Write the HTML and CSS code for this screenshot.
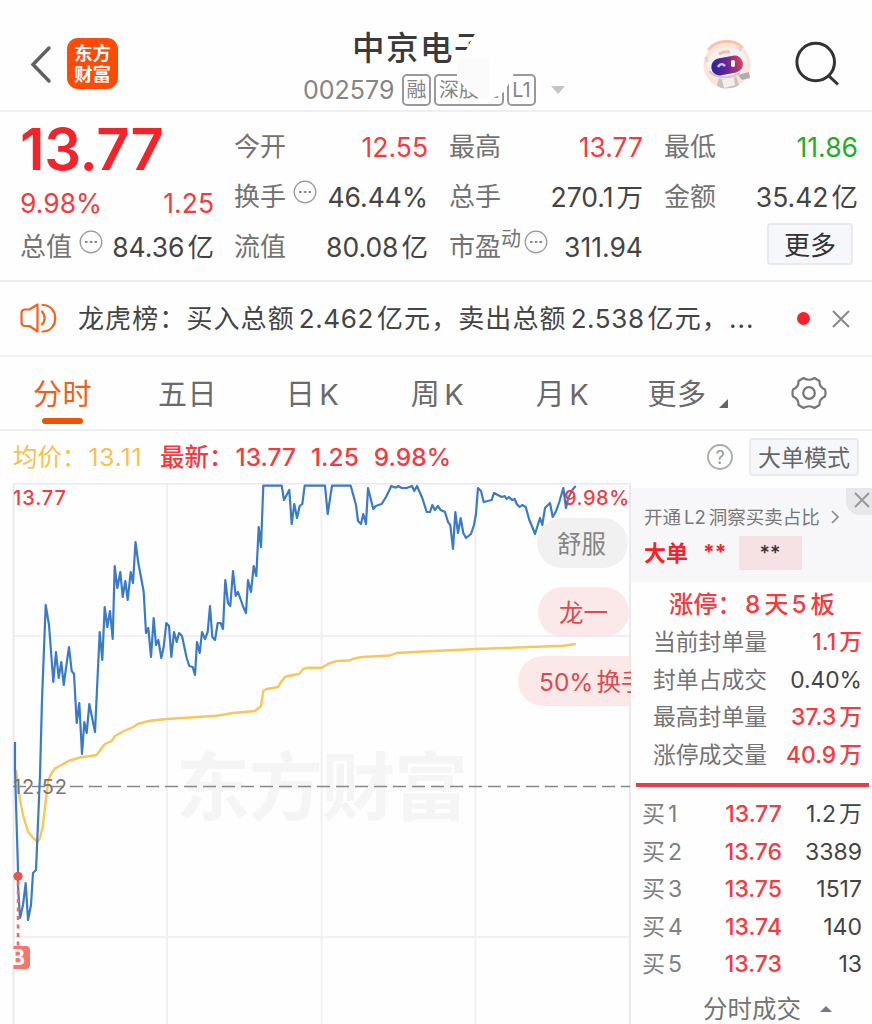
FILE: index.html
```
<!DOCTYPE html>
<html lang="zh-CN">
    <head>
        <meta charset="utf-8">
        <title>中京电子 002579</title>
        <meta name="viewport" content="width=device-width, initial-scale=1.0">
        <link rel="stylesheet" href="styles.css">
    </head>
    <body>

        <header class="header">
            <svg class="back" width="24" height="40" viewBox="0 0 24 40"><path d="M21 4 5 20.500 21 37"/></svg>
            <div class="logo"><span>东方</span><span>财富</span></div>
            <div class="title">
                <h1>中京电子</h1>
                <div class="code">
                    <span class="num">002579</span>
                    <span class="tag">融</span>
                    <span class="tag tag-wide">深股通</span>
                    <span class="tag">L1</span>
                    <i class="arrow-down"></i>
                </div>
                <svg class="smudge" width="66" height="74" viewBox="452 28 66 74">
                    <path class="smudge-light" d="M477 30 466 50 457 58 457 77 467 90 478 97 490 100 504 92 513 77 516 30Z"/>
                    <path class="smudge-dark" d="M457 59h32v40h-9l-13-9-10-13Z"/>
                </svg>
            </div>
            <svg class="robot" width="54" height="54" viewBox="700 38 54 54">
                <defs>
                    <linearGradient id="visor">
                        <stop offset="0" stop-color="#2a249c"/>
                        <stop offset=".5" stop-color="#6a2599"/>
                        <stop offset="1" stop-color="#e0434f"/>
                    </linearGradient>
                </defs>
                <circle cx="727" cy="65" r="23.500" fill="#fde4d6"/>
                <path d="M708 50A24 24 0 0 1 743 48" fill="none" stroke="#fbc4a8" stroke-width="3"/>
                <path d="M719 78q8 5 17-2l3 9q-5 4-11 3-7 2-11-3z" fill="#c9c3c6"/>
                <path d="M722 80l12-2 1 7-11 3z" fill="#f3eff0"/>
                <path d="M738 75l11-3 1 6-8 2z" fill="#b3acb3"/>
                <ellipse cx="727" cy="63" rx="20" ry="15.500" fill="#f4f1f2" transform="rotate(-12 727 63)"/>
                <path d="M709 71q9 9 24 5l7-3" fill="none" stroke="#cfc8cb" stroke-width="2"/>
                <path d="M706 57l1 5M739 47l2 4" stroke="#ddd5da" stroke-width="3"/>
                <path d="M719 54q5-3 11-2" fill="none" stroke="#e6c3ae" stroke-width="3"/>
                <rect x="711" y="57" width="32" height="17" rx="8.500" fill="url(#visor)" transform="rotate(-11 727 65)"/>
                <path d="M718 67q3-5 7-1" fill="none" stroke="#c5c9fa" stroke-width="2.500"/>
                <rect x="731" y="60" width="4" height="7" rx="2" fill="#fff"/>
            </svg>
            <svg class="search" width="48" height="48" viewBox="793 39 48 48"><circle cx="815.700" cy="62" r="18.800"/><path d="M829 76l9 8.500"/></svg>
        </header>

        <section class="quote">
            <div class="quote-main">
                <div class="price">13.77</div>
                <div class="change"><span>9.98%</span><span>1.25</span></div>
                <div class="cell"><span class="label">总值</span><svg class="dots" width="24" height="24"><use href="#dots"/></svg><span class="val">84.36<b>亿</b></span></div>
            </div>
            <div class="quote-grid">
                <div class="cell"><span class="label">今开</span><span class="val red">12.55</span></div>
                <div class="cell"><span class="label">最高</span><span class="val red">13.77</span></div>
                <div class="cell"><span class="label">最低</span><span class="val green">11.86</span></div>
                <div class="cell"><span class="label">换手</span><svg class="dots" width="24" height="24"><use href="#dots"/></svg><span class="val">46.44%</span></div>
                <div class="cell"><span class="label">总手</span><span class="val">270.1<b>万</b></span></div>
                <div class="cell"><span class="label">金额</span><span class="val">35.42<b>亿</b></span></div>
                <div class="cell"><span class="label">流值</span><span class="val">80.08<b>亿</b></span></div>
                <div class="cell"><span class="label">市盈</span><span class="sup">动</span><svg class="dots dots-tight" width="24" height="24"><use href="#dots"/></svg><span class="val">311.94</span></div>
                <div class="cell"><button class="more">更多</button></div>
            </div>
        </section>

        <section class="news">
            <svg class="speaker" width="38" height="34" viewBox="20 302 38 34">
                <path d="M37.500 304.500v27l-8-5.500h-5q-3-.5-3-3.500v-9.500q0-3 3-3.500h5z"/>
                <path d="M42 311.500q5.500 6.500 0 13M42.500 305c17 0 17 26.500 0 26.500"/>
            </svg>
            <p>龙虎榜：买入总额<em>2.462</em>亿元，卖出总额<em>2.538</em>亿元，<span class="ellipsis">...</span></p>
            <i class="dot"></i>
            <svg class="close" width="18" height="18"><path d="M1 1l16 16M17 1 1 17"/></svg>
        </section>

        <nav class="tabs">
            <a class="active">分时</a>
            <a>五日</a>
            <a>日<em>K</em></a>
            <a>周<em>K</em></a>
            <a>月<em>K</em></a>
            <a>更多<i class="corner"></i></a>
            <svg class="gear" width="36" height="36" viewBox="-18 -18 36 36">
                <path d="M-5.500-15Q0-11.500 5.500-15L10.500-12Q10-6 16-3.500 17 0 16 3.500 10 6 10.500 12L5.500 15Q0 11.500-5.500 15L-10.500 12Q-10 6-16 3.500-17 0-16-3.500-10-6-10.500-12Z"/>
                <circle r="5.800"/>
            </svg>
        </nav>

        <section class="legend">
            <span class="avg">均价：<em>13.11</em></span>
            <span class="last">最新：<em>13.77</em><em>1.25</em><em>9.98%</em></span>
            <svg class="help" width="28" height="28"><circle cx="14" cy="14" r="12"/><text x="14" y="20.500" text-anchor="middle">?</text></svg>
            <button class="mode">大单模式</button>
        </section>

        <main class="main">
            <div class="chart">
                <svg width="632" height="541" viewBox="0 483 632 541">
                    <text class="watermark" x="176" y="814" textLength="292">东方财富</text>
                    <path class="grid" d="M167 484V1024M321.500 484V1024M475.500 484V1024M14 636H630M14 937H630"/>
                    <path class="frame" d="M13.500 1024V483.500H630V1024"/>
                    <path class="base" d="M13 786.500H630"/>
                    <polyline class="avg-line" points="16,770 18,786 20,800 23,815 26,825 28.300,832 33.300,838 37.700,842 40,838 42.700,827 45,807 48.300,780 51.700,773 55,768.500 63.300,764 68.300,761 80,757.500 96.700,755 101.700,748 105,744 111.700,741 115,736 123,731.500 133.300,727 137.700,724 150,720.700 166.700,719 216.700,715.700 233,713 255,711 261,706 263.300,691 266.700,689 278,687 281.700,681 285,677 290,675.500 299,674 303.300,669 308,667.700 321.700,667.700 328.300,663.700 336.700,661 349.300,660.500 353.300,658.700 361.700,657 390,655.500 396.700,653 423,651.500 476.700,649 523,647.300 563,645.700 575.700,644"/>
                    <polyline class="price-line" points="15,742 15,770 18,870 18,885 20,918 23,905 25.700,883 28,920 31,905 33,873 36,870 40,775 42,700 45.700,605 49,625 53.300,682 56,652 58.700,678 61.300,662 63.700,685 66.700,663 69,647 71.700,671 74,674 76.700,723 79.300,703 82,754 84.300,722 86.700,733 89.300,704 95,732 99.700,632 102.300,660 104.700,607 107.300,627 110,611 112.700,639 114.700,566 117.300,588 120.300,572 122.700,597 125.300,581 127.700,600 130.700,572 133,583 135.500,542 138.300,563 141,577 143.700,592 146,633 148.300,628 151,657 153.700,618 156,645 158.300,640 161.300,658 163.700,647 166.300,623 169,626 171.300,657 174,632 176.700,642 179,633 182,636 186.700,658 189.300,666 192.700,667 195,675 197,642 199.700,653 202,632 205,639 207.700,632 210,606 212.300,637 215,640 217.700,623 220.700,623 223,629 225.300,580 228,603 230.300,606 233,571 235.700,596 238,592 243.300,607 246,613 248,580 251,592 253.700,566 256.300,576 258.700,527 261,547 263.300,485.700 281.700,485.700 284,500 289.300,490 291.700,524 294.300,504 297,518 299.700,506 302.300,504 304.700,485.700 325,485.700 327.700,514 332,485.700 350.700,485.700 356,505 358,521 361,524 363.300,514 366,524 368,488 373.300,509 375.700,506 381.700,504 386,497 391.300,486 395.700,487.700 398.300,486 401.700,488 406.700,488 412,486 414.300,491 417,486 422.300,498 426.700,512 430,512 432.300,505 435,510 437.700,506 440.700,510 445,512 448,522 450.300,525 453,549 455.300,512 458,533 460.700,518 463.300,533 466,538 471,534 474,525 476,514 478,488 481,491 483.700,502 491.700,500 494,493 501.700,497 504.700,496 506.700,499 509,497 512,500 514.700,499 516.700,504 519.700,507 522.300,505 525.700,507 529.300,520 532.700,528 535,534 540,518 542.300,525 545,508 550,503 552.700,517 555.700,512 559.300,502 563.300,488 566,508 568.300,498 572.300,490 575.700,486"/>
                    <path class="buy-stem" d="M18 882V946"/>
                    <circle class="buy-point" cx="18" cy="876.300" r="4.600"/>
                    <path class="buy-flag" d="M13.500 946H26q4 0 4 4v15q0 4-4 4H13.500z"/>
                    <text class="buy-text" x="11" y="965">B</text>
                    <text class="axis red-text" x="13" y="504.500" textLength="53">13.77</text>
                    <text class="axis red-text" x="564" y="504.500" textLength="65">9.98%</text>
                    <text class="axis" x="13" y="793.500" textLength="54">12.52</text>
                </svg>
                <div class="pills">
                    <span class="pill pill-gray">舒服</span>
                    <span class="pill">龙一</span>
                    <span class="pill pill-cut"><em>50%</em>换手</span>
                </div>
            </div>

            <aside class="side">
                <div class="promo">
                    <div class="promo-line">开通<em>L2</em>洞察买卖占比<svg width="8" height="14"><path d="M1 1l6 6-6 6"/></svg></div>
                    <div class="promo-big"><strong>大单</strong><span class="stars">**</span><span class="stars-box">**</span></div>
                    <div class="promo-close"><svg width="16" height="16"><path d="M1 1l14 14M15 1 1 15"/></svg></div>
                </div>
                <div class="limit">
                    <h2>涨停：<em>8</em>天<em>5</em>板</h2>
                    <div class="row"><span>当前封单量</span><span class="red">1.1<b>万</b></span></div>
                    <div class="row"><span>封单占成交</span><span class="dark">0.40%</span></div>
                    <div class="row"><span>最高封单量</span><span class="red">37.3<b>万</b></span></div>
                    <div class="row"><span>涨停成交量</span><span class="red">40.9<b>万</b></span></div>
                </div>
                <div class="orders">
                    <div class="order"><span>买<em>1</em></span><span class="red">13.77</span><span class="dark">1.2<b>万</b></span></div>
                    <div class="order"><span>买<em>2</em></span><span class="red">13.76</span><span class="dark">3389</span></div>
                    <div class="order"><span>买<em>3</em></span><span class="red">13.75</span><span class="dark">1517</span></div>
                    <div class="order"><span>买<em>4</em></span><span class="red">13.74</span><span class="dark">140</span></div>
                    <div class="order"><span>买<em>5</em></span><span class="red">13.73</span><span class="dark">13</span></div>
                </div>
                <div class="deals">分时成交<i class="arrow-up"></i></div>
            </aside>
        </main>

        <svg class="symbols" width="0" height="0">
            <symbol id="dots" viewBox="0 0 24 24">
                <circle cx="12" cy="12" r="10.800" fill="none" stroke="#999" stroke-width="1.300"/>
                <path d="M6 12h2.500M10.800 12h2.500M15.500 12h2.500" stroke="#888" stroke-width="2"/>
            </symbol>
        </svg>
    </body>
</html>
```

FILE: styles.css
```
* {
    box-sizing: border-box;
    margin: 0;
}

body {
    width: 872px;
    height: 1024px;
    overflow: hidden;
    background: #fefefe;
    color: #444;
    font-family: Inter, "Noto Sans CJK SC", sans-serif;
}

em, i, b {
    font-style: normal;
    font-weight: inherit;
}

button {
    padding: 0;
    border: 2px solid #e9eaf0;
    border-radius: 4px;
    background: #f6f7fa;
    color: #333;
    font-family: inherit;
}

svg {
    flex: none;
}

.red {
    color: #f43b40;
}

.green {
    color: #1fae20;
}

.dark {
    color: #444;
}

/* header */

.header {
    position: relative;
    display: flex;
    height: 112px;
    padding: 38px 31px 0 28px;
    border-bottom: 2px solid #efeff1;
}

.back {
    margin-top: 6px;
    fill: none;
    stroke: #606060;
    stroke-width: 3.5;
    stroke-linecap: round;
}

.logo {
    display: flex;
    flex-direction: column;
    justify-content: center;
    width: 51px;
    height: 51px;
    margin-left: 15px;
    border-radius: 11px;
    background: #ff4a08;
    color: #fff;
    font-size: 18.500px;
    font-weight: 700;
    line-height: 21px;
    text-align: center;
}

.title {
    width: 270px;
    margin-left: 185px;
    margin-top: -10px;
}

.title h1 {
    padding-left: 49px;
    color: #3a3a3a;
    font-size: 32.500px;
    font-weight: 500;
    letter-spacing: 1.5px;
    line-height: 42px;
}

.code {
    display: flex;
    align-items: center;
    height: 32px;
    margin-top: 4px;
    color: #858585;
    font-size: 20px;
}

.num {
    width: 99px;
    font-size: 25px;
    letter-spacing: 0;
}

.tag {
    width: 29px;
    height: 32px;
    margin-right: 3px;
    border: 2px solid #999;
    border-radius: 5px;
    line-height: 29px;
    text-align: center;
}

.tag-wide {
    width: 70px;
}

.arrow-down {
    margin-left: 12px;
    border: 7px solid transparent;
    border-top: 8px solid #c4c4c4;
    border-bottom: 0;
}

.smudge {
    position: absolute;
    left: 452px;
    top: 28px;
}

.smudge-light {
    fill: #fefefe;
}

.smudge-dark {
    fill: #fbfbfb;
}

.robot {
    margin-left: 127px;
}

.search {
    margin-left: auto;
    margin-top: 1px;
    fill: none;
    stroke: #333;
    stroke-width: 3;
}

/* quote */

.quote {
    display: flex;
    gap: 20px;
    height: 170px;
    padding: 9px 14px 0 20px;
    border-bottom: 2px solid #ececee;
}

.quote-main {
    width: 194px;
}

.price {
    height: 57px;
    color: #f5222a;
    font-size: 58px;
    font-weight: 600;
    line-height: 57px;
    letter-spacing: -.4px;
}

.change {
    display: flex;
    justify-content: space-between;
    height: 34px;
    margin-bottom: 9px;
    margin-top: 8px;
    color: #f43b40;
    font-size: 26.500px;
    line-height: 34px;
}

.quote-grid {
    display: grid;
    grid-template-columns: repeat(3, 194px);
    grid-auto-rows: 50px;
    column-gap: 21px;
}

.cell {
    display: flex;
    align-items: center;
    height: 50px;
    font-size: 26px;
    line-height: 50px;
}

.quote-main .cell {
    height: 34px;
}

.label {
    padding-top: 2px;
    color: #737373;
}

.val {
    margin-left: auto;
    padding-top: 1px;
    font-size: 26.500px;
}

.val b {
    margin-left: 3px;
}

.dots {
    margin-left: 7px;
    margin-bottom: 9px;
}

.dots-tight {
    margin-left: 3px;
}

.sup {
    margin-bottom: 14px;
    color: #737373;
    font-size: 20px;
}

.more {
    width: 86px;
    height: 42px;
    margin-left: auto;
    margin-right: 5px;
    margin-bottom: 5px;
    padding-top: 3px;
    font-size: 26px;
    line-height: 36px;
}

/* news */

.news {
    display: flex;
    align-items: center;
    height: 75px;
    padding-left: 20px;
    border-bottom: 2px solid #f0f0f2;
}

.speaker {
    fill: none;
    stroke: #f0641e;
    stroke-width: 2.2;
    stroke-linecap: round;
    stroke-linejoin: round;
}

.news p {
    width: 678px;
    margin-left: 20px;
    font-size: 26px;
    letter-spacing: 1.1px;
    line-height: 73px;
    white-space: nowrap;
}

.news em {
    margin: 0 3px 0 4px;
    letter-spacing: .6px;
}

.dot {
    width: 13px;
    height: 13px;
    margin-left: 41px;
    border-radius: 50%;
    background: #f5222a;
}

.close {
    margin-left: 22px;
    stroke: #888;
    stroke-width: 2;
}

/* tabs */

.tabs {
    display: grid;
    grid-template-columns: repeat(6, 125px) 1fr;
    align-items: center;
    height: 74px;
    border-bottom: 2px solid #eeeef3;
    color: #6a6a6a;
    font-size: 29px;
    text-align: center;
}

.tabs a {
    position: relative;
    padding-top: 4px;
    letter-spacing: .5px;
    line-height: 42px;
}

.tabs em {
    margin-left: 4px;
}

.tabs .active {
    color: #f06016;
}

.active::after {
    content: "";
    position: absolute;
    left: 42px;
    bottom: -8px;
    width: 41px;
    height: 6px;
    border-radius: 3px;
    background: #ea5504;
}

.corner {
    display: inline-block;
    margin-left: 12px;
    margin-bottom: -3px;
    border-bottom: 9px solid #666;
    border-left: 9px solid transparent;
}

.gear {
    margin-left: 41px;
    fill: none;
    stroke: #777;
    stroke-width: 2.2;
    stroke-linejoin: round;
}

/* legend */

.legend {
    display: flex;
    align-items: center;
    height: 52px;
    padding: 0 13px;
    font-size: 24.500px;
    line-height: 52px;
}

.avg {
    width: 147px;
    color: #fbc04b;
}

.avg em {
    letter-spacing: .9px;
}

.last {
    color: #f43b40;
    font-weight: 500;
}

.legend em {
    margin-left: 2px;
}

.last em {
    margin-right: 13px;
}

.help {
    margin-left: auto;
    margin-right: 15px;
    fill: none;
    stroke: #aaa;
    stroke-width: 1.8;
}

.help text {
    fill: #999;
    stroke: none;
    font-size: 18px;
}

.mode {
    width: 110px;
    height: 38px;
    padding-top: 2px;
    color: #666;
    font-size: 23px;
    line-height: 32px;
}

/* chart */

.main {
    display: flex;
    height: 541px;
}

.chart {
    position: relative;
    width: 631px;
    overflow: hidden;
}

.chart > svg {
    display: block;
}

.chart path, .chart polyline {
    fill: none;
}

.watermark {
    fill: #f5f5f5;
    font-size: 74px;
    font-weight: 700;
}

.grid {
    stroke: #f0f0f6;
    stroke-width: 2;
}

.frame {
    stroke: #e9e9ee;
    stroke-width: 2;
}

.base {
    stroke: #888;
    stroke-width: 1.3;
    stroke-dasharray: 13 6;
}

.avg-line {
    stroke: #fac559;
    stroke-width: 2.4;
    stroke-linejoin: round;
}

.price-line {
    stroke: #3a7bc8;
    stroke-width: 2.2;
    stroke-linejoin: round;
}

.buy-stem {
    stroke: #f4695f;
    stroke-width: 2.5;
    stroke-dasharray: 4 4.5;
}

.buy-point {
    fill: #e85550;
}

.chart .buy-flag {
    fill: #fa7569;
}

.buy-text {
    fill: #fff;
    font-size: 21px;
    font-weight: 700;
}

.axis {
    fill: #777;
    font-size: 20px;
}

.chart .red-text {
    fill: #f43b40;
    font-weight: 500;
}

.pills {
    position: absolute;
    left: 518px;
    top: 35px;
    display: flex;
    flex-direction: column;
    align-items: flex-start;
    gap: 19px;
}

.pill {
    width: 91px;
    height: 50px;
    margin-left: 20px;
    border-radius: 25px;
    background: rgba(249, 226, 226, .75);
    color: #e0494c;
    font-size: 24.500px;
    line-height: 52px;
    text-align: center;
    white-space: nowrap;
}

.pill-gray {
    margin-left: 19px;
    padding-right: 2px;
    background: rgba(240, 240, 240, .9);
    color: #858585;
}

.pill-cut {
    width: 150px;
    margin-left: 0;
    padding-left: 21px;
    text-align: left;
}

.pill em {
    margin-right: 3px;
}

/* side panel */

.side {
    width: 241px;
    padding-top: 5px;
}

.promo {
    position: relative;
    height: 94px;
    padding: 16px 0 0 13px;
    background: #f7f7fa;
}

.promo-line {
    height: 26px;
    color: #777;
    font-size: 18.500px;
    line-height: 27px;
    white-space: nowrap;
}

.promo-line em {
    margin: 0 3px;
}

.promo-line svg {
    margin-left: 11px;
    fill: none;
    stroke: #888;
    stroke-width: 1.6;
}

.promo-big {
    display: flex;
    align-items: center;
    height: 34px;
    margin-top: 6px;
    color: #f5222a;
    font-size: 22px;
    line-height: 34px;
}

.stars {
    margin-left: 15px;
    font-size: 21px;
    font-weight: 700;
}

.stars-box {
    width: 63px;
    height: 34px;
    margin-left: 12px;
    background: #f6e1e4;
    color: #333;
    font-size: 20px;
    font-weight: 500;
    text-align: center;
}

.promo-close {
    position: absolute;
    right: 0;
    top: 0;
    width: 26px;
    height: 27px;
    padding: 4px 0 0 8px;
    border-bottom-left-radius: 14px;
    background: #e8e8ea;
    line-height: 0;
}

.promo-close path {
    stroke: #999;
    stroke-width: 2;
}

.limit {
    height: 205px;
    margin: 0 3px 0 5px;
    padding: 3px 7px 0 17px;
    border-bottom: 4px solid #e53e43;
}

.limit h2 {
    height: 37px;
    padding-left: 16px;
    color: #f43b40;
    font-size: 24.300px;
    font-weight: 500;
    line-height: 39px;
    white-space: nowrap;
}

.limit h2 em {
    margin: 0 4px 0 3px;
}

.row {
    display: flex;
    justify-content: space-between;
    height: 37.5px;
    color: #737373;
    font-size: 22.8px;
    line-height: 39px;
}

.row .red, .order .red {
    font-weight: 500;
}

.row b, .order b {
    margin-left: 3px;
}

.orders {
    padding: 9px 10px 0 11px;
}

.order {
    display: grid;
    grid-template-columns: 60px 80px 1fr;
    height: 37.5px;
    color: #808080;
    font-size: 23px;
    line-height: 37.5px;
    text-align: right;
}

.order span:first-child {
    text-align: left;
}

.order em {
    margin-left: 3px;
}

.deals {
    display: flex;
    align-items: center;
    height: 50px;
    padding-left: 72px;
    color: #737373;
    font-size: 24.5px;
    line-height: 50px;
}

.arrow-up {
    margin-left: 19px;
    border: 6px solid transparent;
    border-top: 0;
    border-bottom: 6px solid #777a86;
}

.symbols {
    position: absolute;
}
```
